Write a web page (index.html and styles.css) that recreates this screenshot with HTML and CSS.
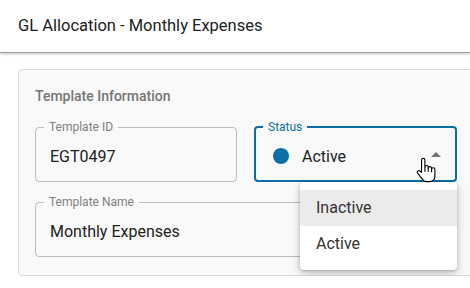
FILE: index.html
```html
<!DOCTYPE html>
<html lang="en">
<head>
  <meta charset="UTF-8" />
  <title>GL Allocation</title>
  <link rel="stylesheet" href="styles.css">
</head>
<body>
  <header class="page-header">
    <h1>GL Allocation - Monthly Expenses</h1>
  </header>

  <section class="card">
    <h2>Template Information</h2>
    <div class="form-grid">
      <fieldset class="field">
        <legend>Template ID</legend>
        <div class="value">EGT0497</div>
      </fieldset>

      <div class="select-wrap">
        <fieldset class="field focused">
          <legend>Status</legend>
          <div class="value">
            <span class="dot"></span>
            <span>Active</span>
            <span class="caret"></span>
          </div>
        </fieldset>
        <ul class="menu">
          <li class="hover">Inactive</li>
          <li>Active</li>
        </ul>
        <svg class="cursor" width="20" height="26" viewBox="0 0 18 23">
          <path d="M5 13.5V2.5a1.5 1.5 0 0 1 3 0V9a1.5 1.5 0 0 1 3 0v1a1.5 1.5 0 0 1 3 0v1a1.5 1.5 0 0 1 3 0v6c0 3-2 5-5 5H9.5c-2 0-3-1-4-2.5L1.6 14.6a1.4 1.4 0 0 1 2-2Z" fill="#fff" stroke="#000" stroke-width="1" stroke-linejoin="round"/>
          <path d="M8 9v4M11 10v3M14 11v2.5" stroke="#000" stroke-width="1" fill="none"/>
        </svg>
      </div>

      <fieldset class="field wide">
        <legend>Template Name</legend>
        <div class="value">Monthly Expenses</div>
      </fieldset>
    </div>
  </section>
</body>
</html>
```

FILE: styles.css
```css
html, body {
  margin: 0;
  overflow: hidden;
}
body {
  font-family: Roboto, "Noto Sans", sans-serif;
  background: #fff;
  color: #212121;
}
.page-header {
  height: 52px;
  border-bottom: 1px solid #9e9e9e;
  box-shadow: 0 1px 3px rgba(0,0,0,0.25);
  padding: 0 18px;
  display: flex;
  align-items: center;
}
.page-header h1 {
  margin: 0;
  font-size: 16.5px;
  font-weight: 400;
  margin-top: -1px;
}
.card {
  margin: 16px -40px 0 18px;
  background: #f9f9f9;
  border: 1px solid #dcdcdc;
  border-radius: 4px;
  padding: 17px 16px 18px;
}
.card h2 {
  margin: 0 0 15px;
  font-size: 14px;
  font-weight: 500;
  color: #757575;
  line-height: 18px;
}
.form-grid {
  display: grid;
  grid-template-columns: 202px 203px;
  column-gap: 17px;
  row-gap: 13px;
}
.field {
  margin: 0;
  min-width: 0;
  border: 1px solid #bdbdbd;
  border-radius: 4px;
  padding: 0 14px;
  height: 62px;
  box-sizing: border-box;
}
.field.wide {
  grid-column: 1 / -1;
}
.field legend {
  margin-left: -6px;
  padding: 0 5px;
  font-size: 12px;
  line-height: 14px;
  color: #808080;
}
.field .value {
  display: flex;
  align-items: center;
  height: 40px;
  font-size: 16px;
  margin-top: 2px;
}
.field.focused {
  border: 2px solid #0b6fa6;
  padding: 0 13px;
}
.field.focused legend {
  color: #0b6fa6;
}
.dot {
  width: 16px;
  height: 16px;
  border-radius: 50%;
  background: #0b6fa6;
  margin-right: 13px;
  margin-left: 4px;
}
.caret {
  margin-left: auto;
  margin-right: 1px;
  margin-top: -4px;
  width: 0;
  height: 0;
  border-left: 5px solid transparent;
  border-right: 5px solid transparent;
  border-bottom: 5px solid #757575;
}
.select-wrap {
  position: relative;
}
.menu {
  position: absolute;
  top: 62px;
  right: 0;
  width: 157px;
  margin: 0;
  padding: 8px 0;
  list-style: none;
  background: #fff;
  border-radius: 4px;
  box-shadow: 0 3px 8px rgba(0,0,0,0.25), 0 1px 3px rgba(0,0,0,0.15);
  z-index: 2;
}
.menu li {
  height: 36px;
  line-height: 36px;
  padding: 0 16px;
  font-size: 16px;
  color: #333;
}
.menu li.hover {
  background: #ebebeb;
}
.cursor {
  position: absolute;
  left: 162px;
  top: 37px;
  z-index: 3;
}
```
